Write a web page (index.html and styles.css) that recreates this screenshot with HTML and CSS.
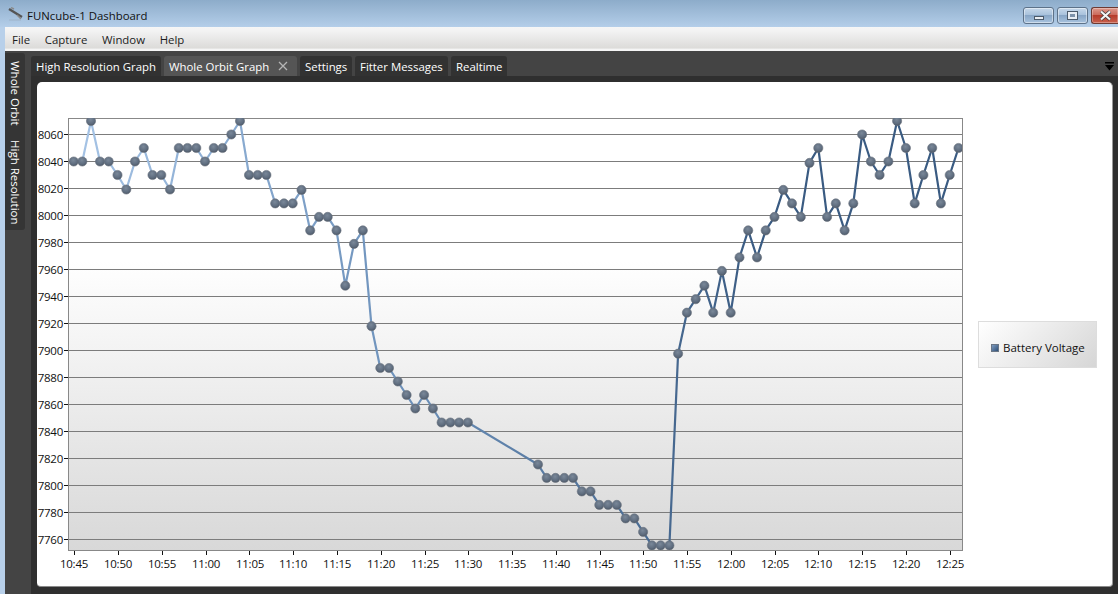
FILE: index.html
```html
<!DOCTYPE html>
<html lang="en">
<head>
<meta charset="utf-8">
<title>FUNcube-1 Dashboard</title>
<link rel="stylesheet" href="styles.css">
</head>
<body>
<div class="window">
  <header class="titlebar">
    <svg class="app-icon" width="16" height="14" viewBox="0 0 16 14">
      <path d="M1 2 L14 10" stroke="#555" stroke-width="2.4"/>
      <path d="M3 0.5 L6 2 M9 8 L13 12" stroke="#8a8a8a" stroke-width="1.4"/>
      <path d="M1 13 H13" stroke="#9fb4c9" stroke-width="1"/>
    </svg>
    <span class="app-title">FUNcube-1 Dashboard</span>
    <div class="win-buttons">
      <div class="win-btn win-min"><span class="glyph-min"></span></div>
      <div class="win-btn win-max"><span class="glyph-max"></span></div>
      <div class="win-btn win-close">
        <svg width="13" height="11" viewBox="0 0 13 11"><path d="M2 1.5 L11 9.5 M11 1.5 L2 9.5" stroke="#3a3a3a" stroke-width="3.6"/><path d="M2 1.5 L11 9.5 M11 1.5 L2 9.5" stroke="#f4f4f4" stroke-width="2.2"/></svg>
      </div>
    </div>
  </header>
  <nav class="menubar">
    <span class="menu-item">File</span>
    <span class="menu-item">Capture</span>
    <span class="menu-item">Window</span>
    <span class="menu-item">Help</span>
  </nav>
  <div class="workspace">
    <aside class="sidebar">
      <div class="side-tab side-tab-a">Whole Orbit</div>
      <div class="side-tab side-tab-b">High Resolution</div>
    </aside>
    <main class="main">
      <div class="tabstrip">
        <div class="tab tab-high">High Resolution Graph</div>
        <div class="tab tab-orbit is-active">Whole Orbit Graph
          <svg class="tab-close" width="10" height="10" viewBox="0 0 10 10"><path d="M1 1 L9 9 M9 1 L1 9" stroke="#b5b5b5" stroke-width="1.3"/></svg>
        </div>
        <div class="tab tab-settings">Settings</div>
        <div class="tab tab-fitter">Fitter Messages</div>
        <div class="tab tab-real">Realtime</div>
        <svg class="overflow" width="9" height="9" viewBox="0 0 9 9"><path d="M0 0 H9 V1.5 H0 Z M0 3 H9 L4.5 8.5 Z" fill="#000"/></svg>
      </div>
      <div class="well">
        <section class="panel">
          <svg class="chart" width="941" height="504" viewBox="37 82 941 504">
            <defs>
              <linearGradient id="plotFill" x1="0" y1="0" x2="0" y2="1">
                <stop offset="0" stop-color="#ffffff"/>
                <stop offset="0.33" stop-color="#ffffff"/>
                <stop offset="1" stop-color="#d8d8d8"/>
              </linearGradient>
              <linearGradient id="lineFill" gradientUnits="userSpaceOnUse" x1="74" y1="0" x2="760" y2="0">
                <stop offset="0" stop-color="#a6c4e6"/>
                <stop offset="0.45" stop-color="#7094bd"/>
                <stop offset="1" stop-color="#3a5b82"/>
              </linearGradient>
              <radialGradient id="dotFill" cx="0.45" cy="0.35" r="0.7">
                <stop offset="0" stop-color="#7a8899"/>
                <stop offset="0.65" stop-color="#5e6c7e"/>
                <stop offset="1" stop-color="#48525f"/>
              </radialGradient>
              <marker id="dot" markerUnits="userSpaceOnUse" markerWidth="12" markerHeight="12" refX="6" refY="6">
                <circle cx="6" cy="6" r="4.6" fill="url(#dotFill)" stroke="#6b7480" stroke-width="0.6"/>
              </marker>
              <clipPath id="plotClip"><rect x="68" y="118" width="894" height="432"/></clipPath>
            </defs>
            <rect class="plot-bg" x="68.5" y="118.5" width="894" height="432"/>
            <path class="grid" d="M68 134.5H962M68 161.5H962M68 188.5H962M68 215.5H962M68 242.5H962M68 269.5H962M68 296.5H962M68 323.5H962M68 350.5H962M68 377.5H962M68 404.5H962M68 431.5H962M68 458.5H962M68 485.5H962M68 512.5H962M68 539.5H962"/>
            <path class="ticks" d="M64 134.5H68M64 161.5H68M64 188.5H68M64 215.5H68M64 242.5H68M64 269.5H68M64 296.5H68M64 323.5H68M64 350.5H68M64 377.5H68M64 404.5H68M64 431.5H68M64 458.5H68M64 485.5H68M64 512.5H68M64 539.5H68"/>
            <path class="ticks" d="M74.5 551V555M118.5 551V555M162.5 551V555M206.5 551V555M249.5 551V555M293.5 551V555M337.5 551V555M381.5 551V555M425.5 551V555M468.5 551V555M512.5 551V555M556.5 551V555M600.5 551V555M643.5 551V555M687.5 551V555M731.5 551V555M775.5 551V555M818.5 551V555M862.5 551V555M906.5 551V555M950.5 551V555"/>
            <g class="y-labels">
              <text x="63" y="139">8060</text><text x="63" y="166">8040</text><text x="63" y="193">8020</text><text x="63" y="220">8000</text>
              <text x="63" y="247">7980</text><text x="63" y="274">7960</text><text x="63" y="301">7940</text><text x="63" y="328">7920</text>
              <text x="63" y="355">7900</text><text x="63" y="382">7880</text><text x="63" y="409">7860</text><text x="63" y="436">7840</text>
              <text x="63" y="463">7820</text><text x="63" y="490">7800</text><text x="63" y="517">7780</text><text x="63" y="544">7760</text>
            </g>
            <g class="x-labels">
              <text x="74" y="568">10:45</text><text x="118" y="568">10:50</text><text x="162" y="568">10:55</text><text x="206" y="568">11:00</text>
              <text x="250" y="568">11:05</text><text x="293" y="568">11:10</text><text x="337" y="568">11:15</text><text x="381" y="568">11:20</text>
              <text x="425" y="568">11:25</text><text x="468" y="568">11:30</text><text x="512" y="568">11:35</text><text x="556" y="568">11:40</text>
              <text x="600" y="568">11:45</text><text x="643" y="568">11:50</text><text x="687" y="568">11:55</text><text x="731" y="568">12:00</text>
              <text x="775" y="568">12:05</text><text x="818" y="568">12:10</text><text x="862" y="568">12:15</text><text x="906" y="568">12:20</text>
              <text x="950" y="568">12:25</text>
            </g>
            <g clip-path="url(#plotClip)">
              <polyline class="series" points="73.7,161.5 82.3,161.5 91,121 100,161.5 108.7,161.5 117.5,175 126.3,189.5 135,161.5 143.8,148 152.5,175 161.3,175 170,189.5 178.8,148 187.5,148 196.3,148 205,161.5 213.8,148 222.5,148 231.3,134.5 240,121 249,175 257.7,175 266.4,175 275.2,203.4 284,203.4 292.7,203.4 301.5,189.9 310.2,230.4 319,216.9 327.7,216.9 336.5,230.4 345.3,285.7 354,243.9 362.8,230.4 371.5,326.2 380.3,368 389,368 397.8,381.5 406.6,395 415.3,408.5 424.1,395 432.9,408.5 441.6,422.5 450.4,422.5 459.1,422.5 467.9,422.5 538,464.5 546.7,477.9 555.5,477.9 564.3,477.9 573,477.9 581.8,491.4 590.5,491.4 599.3,504.9 608.1,504.9 616.8,504.9 625.6,518.4 634.3,518.4 643.1,531.9 651.9,545.4 660.6,545.4 669.4,545.4 678.1,353.7 686.9,312.7 695.7,299.2 704.4,285.7 713.2,312.7 721.9,270.9 730.7,312.7 739.5,257.4 748.2,230.4 757,257.4 765.7,230.4 774.5,216.9 783.3,189.9 792,203.4 800.8,216.9 809.5,162.9 818.3,148 827.1,216.9 835.8,203.4 844.6,230.4 853.3,203.4 862.1,134.5 870.9,161.5 879.6,175 888.4,161.5 897.1,121 905.9,148 914.7,203.4 923.4,175 932.2,148 940.9,203.4 949.7,175 958.5,148"/>
            </g>
          </svg>
          <div class="legend">
            <span class="legend-swatch"></span>
            <span class="legend-label">Battery Voltage</span>
          </div>
        </section>
      </div>
    </main>
  </div>
</div>
</body>
</html>
```

FILE: styles.css
```css
* { box-sizing: border-box; }
html, body { margin: 0; height: 100%; overflow: hidden; }
body { font-family: "Open Sans", "Noto Sans", sans-serif; }

.window {
  width: 1118px;
  height: 594px;
  display: flex;
  flex-direction: column;
  background: #b8d0ea;
}

/* title bar */
.titlebar {
  height: 27px;
  flex: none;
  display: flex;
  align-items: flex-start;
  background: linear-gradient(#8dacca, #b4cee9);
}
.app-icon { margin: 7px 0 0 8px; flex: none; }
.app-title {
  margin: 7px 0 0 3px;
  font-size: 11.4px;
  line-height: 17px;
  color: #111;
}
.win-buttons {
  margin: 7px 0 0 auto;
  display: flex;
  gap: 3px;
}
.win-btn {
  height: 17px;
  display: flex;
  align-items: center;
  justify-content: center;
  border: 1px solid #5d7289;
  border-radius: 3px;
}
.win-min, .win-max {
  width: 31px;
  background: linear-gradient(#c6d8ea 0, #a9c2dc 45%, #88a6c6 50%, #a8c3df 100%);
  box-shadow: inset 0 0 0 1px rgba(255,255,255,.45);
}
.win-close {
  width: 27px;
  border-right: 0;
  border-radius: 3px 0 0 3px;
  border-color: #6e3a32;
  background: linear-gradient(#dd9a8d 0, #cc6b5c 45%, #b63c2b 50%, #c9604d 100%);
  box-shadow: inset 0 0 0 1px rgba(255,255,255,.3);
}
.glyph-min {
  width: 10px;
  height: 4px;
  background: #e9eef4;
  border: 1px solid #4c5a6a;
  margin-top: 5px;
}
.glyph-max {
  width: 9px;
  height: 7px;
  border: 2px solid #e9eef4;
  outline: 1px solid #4c5a6a;
  background: #7f93aa;
}

/* menu bar */
.menubar {
  height: 24px;
  flex: none;
  margin-left: 5px;
  padding-left: 7px;
  display: flex;
  align-items: center;
  gap: 14.7px;
  background: linear-gradient(#f6f6f6 0, #f3f3f3 15%, #dcdbd9 88%, #f5f5f5 92%, #f5f5f5 100%);
  font-size: 11.4px;
  color: #1c1c1c;
}

/* workspace */
.workspace {
  flex: 1;
  min-height: 0;
  margin-left: 5px;
  display: flex;
  background: #444;
}
.sidebar {
  width: 26px;
  flex: none;
  padding-top: 2px;
  display: flex;
  flex-direction: column;
  align-items: flex-start;
}
.side-tab {
  width: 20px;
  writing-mode: vertical-rl;
  color: #fff;
  font-size: 11.5px;
  line-height: 20px;
  background: #353535;
  padding: 8px 0 0;
  text-align: left;
}
.side-tab-a { height: 81px; border-radius: 0 3px 0 0; }
.side-tab-b { height: 96px; padding-top: 6px; border-radius: 0 0 3px 0; }

.main {
  flex: 1;
  min-width: 0;
  display: flex;
  flex-direction: column;
}
.tabstrip {
  height: 25px;
  flex: none;
  padding-top: 5px;
  display: flex;
  gap: 3px;
  position: relative;
}
.tab {
  height: 20px;
  padding-left: 5px;
  background: #323232;
  color: #fff;
  font-size: 11.4px;
  line-height: 21px;
  border-radius: 3px 3px 0 0;
  white-space: nowrap;
  position: relative;
}
.tab.is-active { background: #555; }
.tab-high { width: 130px; }
.tab-orbit { width: 133px; }
.tab-settings { width: 52px; }
.tab-fitter { width: 93px; }
.tab-real { width: 56px; }
.tab-close { position: absolute; left: 114px; top: 5px; }
.overflow { position: absolute; right: 4px; top: 11px; }

/* content panel */
.well {
  flex: 1;
  min-height: 0;
  padding: 6px 5px 7px 6px;
  background: #2f2f2f;
}
.panel {
  height: 505px;
  display: flex;
  overflow: hidden;
  background: #fff;
  border-right: 1px solid #9a9a9a;
  border-bottom: 1px solid #8a8a8a;
  border-radius: 5px 5px 4px 4px;
}
.chart { flex: none; display: block; }

.plot-bg { fill: url(#plotFill); stroke: #888; stroke-width: 1; }
.grid { stroke: #7c7c7c; stroke-width: 1; fill: none; }
.ticks { stroke: #111; stroke-width: 1; fill: none; }
.y-labels text, .x-labels text {
  font-family: "Open Sans", sans-serif;
  font-size: 11.5px;
  letter-spacing: -0.25px;
  fill: #111;
}
.y-labels text { text-anchor: end; }
.x-labels text { text-anchor: middle; }
.series {
  fill: none;
  stroke: url(#lineFill);
  stroke-width: 2.2;
  stroke-linejoin: round;
  marker-start: url(#dot);
  marker-mid: url(#dot);
  marker-end: url(#dot);
}

.legend {
  width: 119px;
  height: 47px;
  flex: none;
  margin-top: 239px;
  padding: 6px 0 0 12px;
  display: flex;
  align-items: center;
  gap: 4px;
  border: 1px solid #dddddd;
  background: linear-gradient(135deg, #ffffff, #d6d6d6);
  font-size: 11.5px;
  color: #111;
}
.legend-swatch {
  width: 8px;
  height: 8px;
  flex: none;
  background: linear-gradient(135deg, #7f9cc0, #2f5078);
  border: 1px solid #6a7686;
}
```
